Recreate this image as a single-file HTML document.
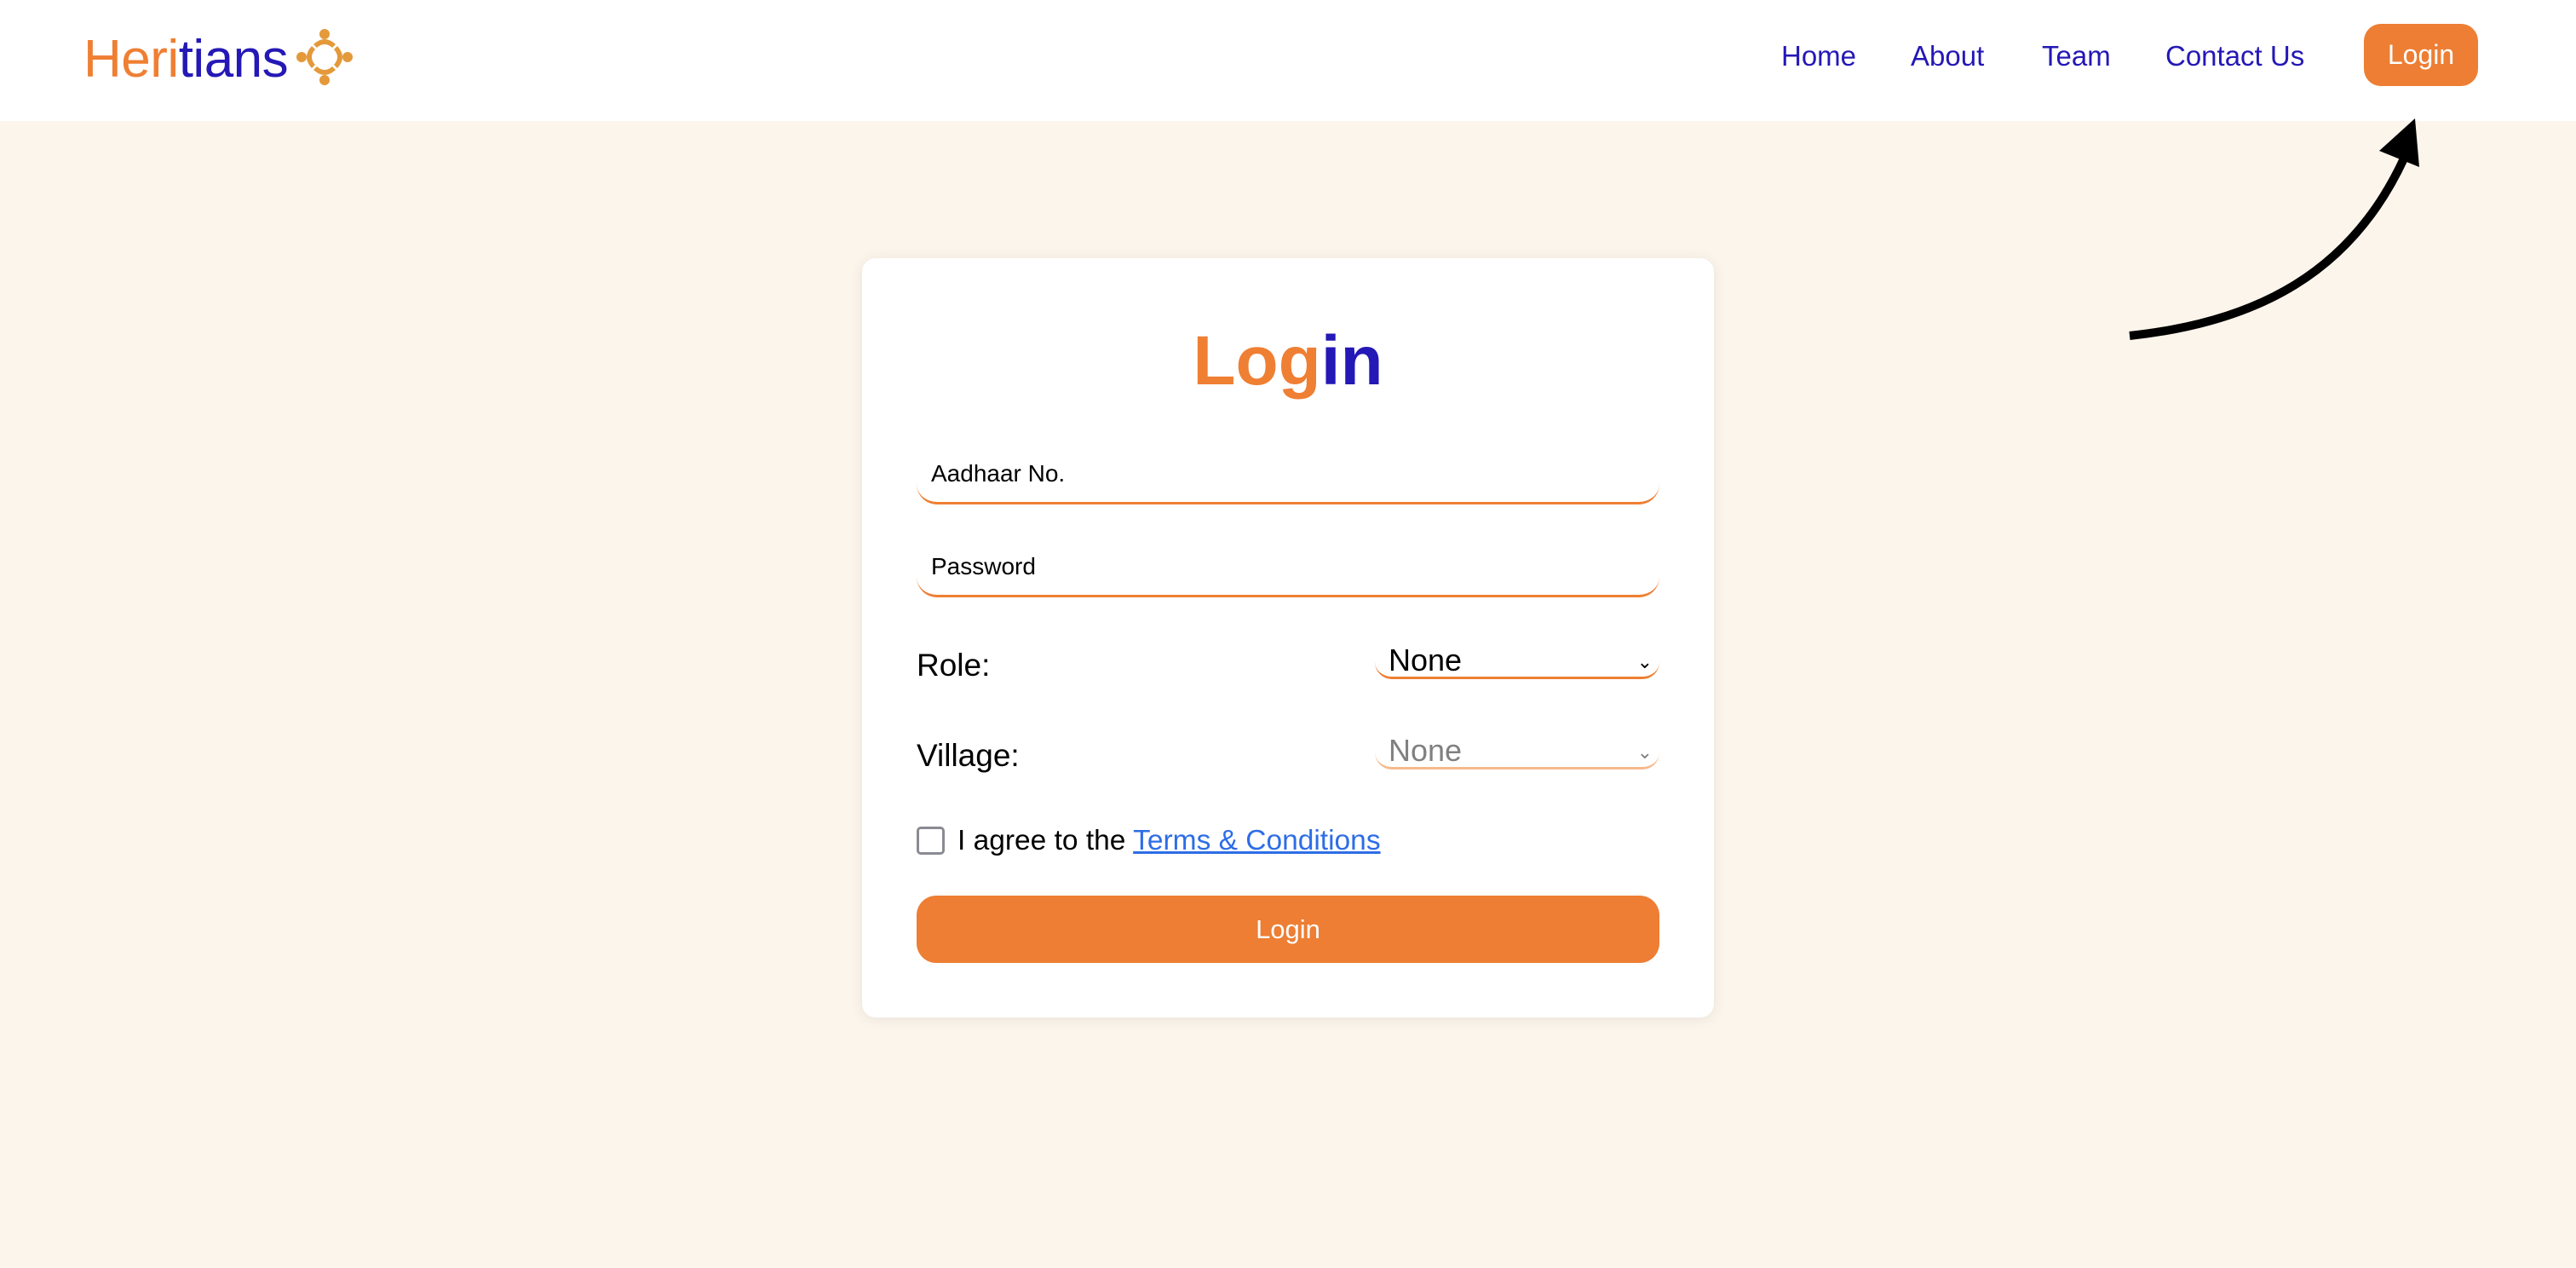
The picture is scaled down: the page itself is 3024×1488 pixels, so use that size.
<!DOCTYPE html>
<html><head><meta charset="utf-8"><style>
*{margin:0;padding:0;box-sizing:border-box}
body{width:3024px;height:1488px;background:#fcf5ec;font-family:"Liberation Sans",sans-serif;position:relative;overflow:hidden}
.hdr{position:absolute;left:0;top:0;width:3024px;height:142px;background:#fff}
.logo{position:absolute;left:98px;top:30px;font-size:62px;line-height:80px;letter-spacing:-0.5px}
.o{color:#ef7f33}.b{color:#2418b6}
.nav{position:absolute;top:44px;font-size:33px;color:#2418b6;line-height:44px}
.lbtn{position:absolute;left:2775px;top:28px;width:134px;height:73px;background:#ed7e33;border-radius:20px;color:#fff;font-size:32px;text-align:center;line-height:73px}
.card{position:absolute;left:1012px;top:303px;width:1000px;height:891px;background:#fff;border-radius:16px;box-shadow:0 2px 16px rgba(0,0,0,.08)}
.title{position:absolute;left:0;width:1000px;top:374px;text-align:center;font-size:82px;font-weight:bold;line-height:100px}
.inp{position:absolute;left:1076px;width:872px;height:60px;border-bottom:3px solid #ef7f33;border-radius:0 0 24px 24px;font-size:28px;padding-left:17px;line-height:48px}
.lbl{position:absolute;left:1076px;font-size:37px;line-height:44px}
.sel{position:absolute;left:1614px;width:334px;height:40px;border-bottom:3px solid #ef7f33;border-radius:0 0 20px 20px;font-size:36px;padding-left:16px;line-height:36px}
.sel span{position:absolute;right:8px;top:2px;font-size:22px}
.cb{position:absolute;left:1076px;top:970px;width:33px;height:33px;border:3px solid #8a8a93;border-radius:5px}
.agree{position:absolute;left:1124px;top:966px;font-size:33.5px;line-height:42px}
.agree a{color:#2d6de6;text-decoration:underline}
.sbtn{position:absolute;left:1076px;top:1051px;width:872px;height:79px;background:#ed7e33;border-radius:23px;color:#fff;font-size:31px;text-align:center;line-height:79px}
</style></head><body>
<div class="hdr"></div>
<div class="logo"><span class="o">Heri</span><span class="b">tians</span></div>
<svg style="position:absolute;left:346px;top:32px" width="70" height="70" viewBox="0 0 70 70">
<g fill="#e4993a">
<circle cx="35" cy="8" r="6"/><circle cx="35" cy="62" r="6"/><circle cx="8" cy="35" r="6"/><circle cx="62" cy="35" r="6"/>
<path d="M22 20 Q35 8 48 20 L44 24 Q35 16 26 24Z"/><path d="M22 50 Q35 62 48 50 L44 46 Q35 54 26 46Z"/>
<path d="M20 22 Q8 35 20 48 L24 44 Q16 35 24 26Z"/><path d="M50 22 Q62 35 50 48 L46 44 Q54 35 46 26Z"/>
</g></svg>
<div class="nav" style="left:2091px">Home</div>
<div class="nav" style="left:2243px">About</div>
<div class="nav" style="left:2397px">Team</div>
<div class="nav" style="left:2542px">Contact Us</div>
<div class="lbtn">Login</div>
<svg style="position:absolute;left:0;top:0" width="3024" height="1488">
<path d="M2500 394 C2650 378 2760 320 2822 186" fill="none" stroke="#000" stroke-width="10"/>
<polygon points="2835,139 2793,177 2840,196" fill="#000"/>
</svg>
<div class="card"></div>
<div class="title" style="left:1012px"><span class="o">Log</span><span class="b">in</span></div>
<div class="inp" style="top:532px">Aadhaar No.</div>
<div class="inp" style="top:641px">Password</div>
<div class="lbl" style="top:759px">Role:</div>
<div class="sel" style="top:757px">None<span>⌄</span></div>
<div class="lbl" style="top:865px">Village:</div>
<div class="sel" style="top:863px;color:#808080;border-color:#f6b98c">None<span>⌄</span></div>
<div class="cb"></div>
<div class="agree">I agree to the <a>Terms &amp; Conditions</a></div>
<div class="sbtn">Login</div>
</body></html>
